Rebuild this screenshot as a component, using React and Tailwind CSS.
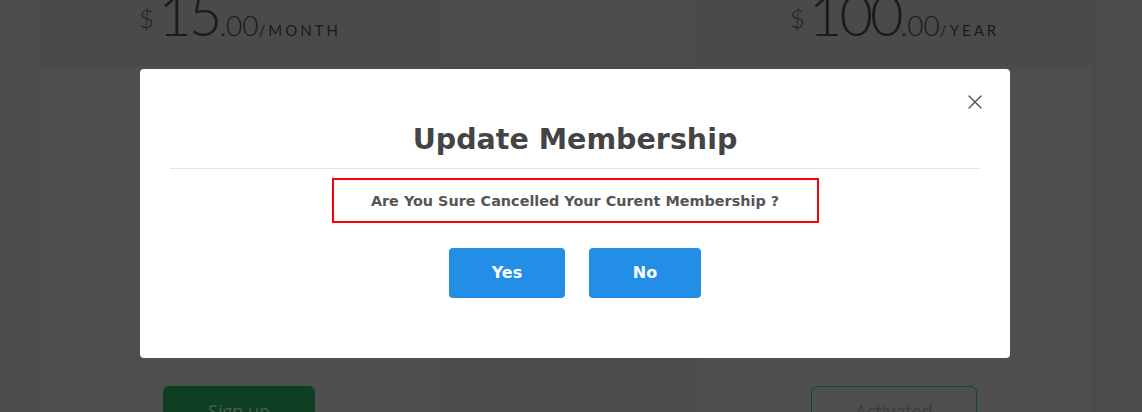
import React from "react";
import { X } from "lucide-react";

// Pricing card behind the overlay (colours already darkened by the backdrop)
function PlanCard({ width, price, period, children }) {
  return (
    <div className="flex flex-col h-full" style={{ width }}>
      <div className="h-[66px] shrink-0 bg-[#4a4a4a] flex items-start justify-center">
        <div className="flex items-baseline text-[#1b1b1b] font-['Lato',sans-serif] font-light leading-none -mt-[15px]">
          <span className="text-[26px] self-start mt-[20px] mr-[4px] text-[#222]">$</span>
          <span className="text-[58px] tracking-[-3px]">{price}</span>
          <span className="text-[28px]">.00</span>
          <span className="text-[15px] tracking-[0.2em] uppercase font-normal">/{period}</span>
        </div>
      </div>
      <div className="flex-1 min-h-0 bg-[#4e4e4e]">{children}</div>
    </div>
  );
}

export default function App() {
  return (
    <div className="relative w-full h-[412px] bg-[#4b4b4b] overflow-hidden font-['Open_Sans',sans-serif]">
      {/* page behind backdrop */}
      <div className="flex h-full pl-[40px]">
        <PlanCard width={400} price="15" period="Month">
          <div className="pt-[320px] pl-[123px]">
            <div className="w-[152px] h-[40px] rounded-[6px] bg-[#0f3f22] text-[#4d5a52] text-[18px] flex justify-center pt-[12px]">
              Sign up
            </div>
          </div>
        </PlanCard>
        <div className="w-[257px]" />
        <PlanCard width={395} price="100" period="Year">
          <div className="pt-[320px] pl-[114px]">
            <div className="w-[166px] h-[40px] rounded-[6px] border border-[#0c4a28] text-[#3c3c3c] text-[18px] flex justify-center pt-[11px]">
              Activated
            </div>
          </div>
        </PlanCard>
      </div>

      {/* modal */}
      <div className="absolute inset-0 pt-[69px] pl-[140px]">
        <div className="relative w-[870px] h-[289px] bg-white rounded-[4px] px-[30px] pt-[53px] font-['DejaVu_Sans',sans-serif]">
          <button className="absolute right-[23px] top-[21px] text-[#555]">
            <X size={24} strokeWidth={1.4} />
          </button>
          <h2 className="text-center text-[28.5px] leading-[36px] font-bold text-[#444] pb-[10px] border-b border-[#e5e5e5]">
            Update Membership
          </h2>
          <div className="flex justify-center mt-[9px]">
            <div className="w-[487px] h-[45px] border-2 border-[#ff0000] flex items-center justify-center pt-[2px] text-[14.4px] font-bold text-[#555]">
              Are You Sure Cancelled Your Curent Membership ?
            </div>
          </div>
          <div className="flex justify-center gap-[24px] mt-[25px]">
            <button className="w-[116px] h-[50px] rounded-[4px] bg-[#228ee6] text-white text-[16px] font-bold">
              Yes
            </button>
            <button className="w-[112px] h-[50px] rounded-[4px] bg-[#228ee6] text-white text-[16px] font-bold">
              No
            </button>
          </div>
        </div>
      </div>
    </div>
  );
}
